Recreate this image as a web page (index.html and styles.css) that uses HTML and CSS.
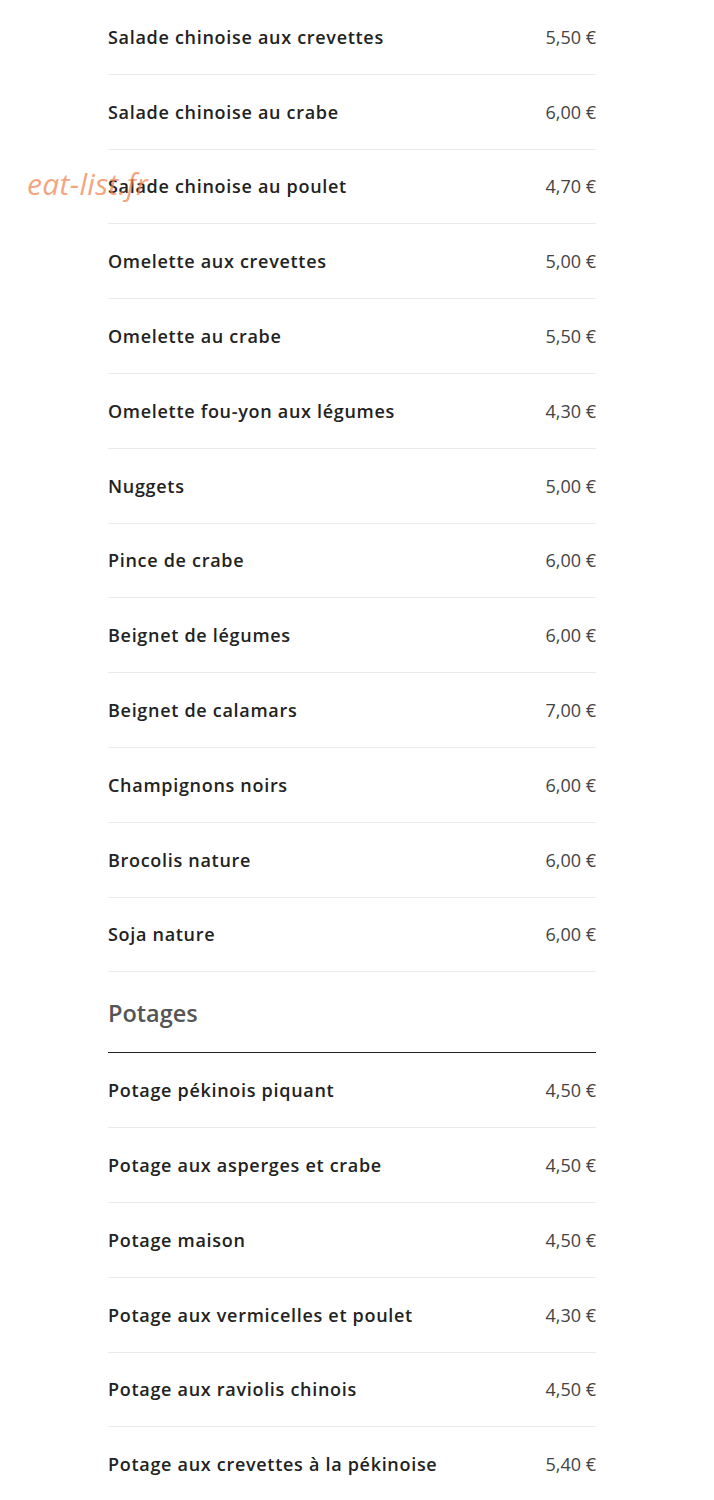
FILE: index.html
```html
<!DOCTYPE html>
<html lang="fr">
<head>
	<title>menu</title>
	<meta charset="utf-8" />
	<meta name="viewport" content="width=device-width,initial-scale=1" />
	<link rel="stylesheet" href="styles.css">
</head>
<body>
	<div class="watermark">eat-list.fr</div>
	<div class="menu">
		<div class="item"><span class="name">Salade chinoise aux crevettes</span><span class="price">5,50 €</span></div>
		<div class="item"><span class="name">Salade chinoise au crabe</span><span class="price">6,00 €</span></div>
		<div class="item"><span class="name">Salade chinoise au poulet</span><span class="price">4,70 €</span></div>
		<div class="item"><span class="name">Omelette aux crevettes</span><span class="price">5,00 €</span></div>
		<div class="item"><span class="name">Omelette au crabe</span><span class="price">5,50 €</span></div>
		<div class="item"><span class="name">Omelette fou-yon aux légumes</span><span class="price">4,30 €</span></div>
		<div class="item"><span class="name">Nuggets</span><span class="price">5,00 €</span></div>
		<div class="item"><span class="name">Pince de crabe</span><span class="price">6,00 €</span></div>
		<div class="item"><span class="name">Beignet de légumes</span><span class="price">6,00 €</span></div>
		<div class="item"><span class="name">Beignet de calamars</span><span class="price">7,00 €</span></div>
		<div class="item"><span class="name">Champignons noirs</span><span class="price">6,00 €</span></div>
		<div class="item"><span class="name">Brocolis nature</span><span class="price">6,00 €</span></div>
		<div class="item"><span class="name">Soja nature</span><span class="price">6,00 €</span></div>

		<h3 class="section">Potages</h3>

		<div class="item"><span class="name">Potage pékinois piquant</span><span class="price">4,50 €</span></div>
		<div class="item"><span class="name">Potage aux asperges et crabe</span><span class="price">4,50 €</span></div>
		<div class="item"><span class="name">Potage maison</span><span class="price">4,50 €</span></div>
		<div class="item"><span class="name">Potage aux vermicelles et poulet</span><span class="price">4,30 €</span></div>
		<div class="item"><span class="name">Potage aux raviolis chinois</span><span class="price">4,50 €</span></div>
		<div class="item"><span class="name">Potage aux crevettes à la pékinoise</span><span class="price">5,40 €</span></div>
	</div>
</body>
</html>
```

FILE: styles.css
```css
:root {
	--name-color: #222;
	--price-color: #444;
	--line-color: #ebebeb;
	--row-height: 74.8px;
}

*,
*:before,
*:after {
	box-sizing: border-box;
	margin: 0;
	padding: 0;
}

body {
	background: #fff;
	font-family: "Open Sans", "Liberation Sans", sans-serif;
	overflow: hidden;
}

.menu {
	width: 488px;
	margin-left: 108px;
}

.item {
	display: flex;
	justify-content: space-between;
	align-items: center;
	height: var(--row-height);
	border-bottom: 1px solid var(--line-color);
}

.name {
	font-size: 18px;
	font-weight: 600;
	color: var(--name-color);
	letter-spacing: 0.7px;
}

.price {
	font-size: 18px;
	color: var(--price-color);
}

.section {
	display: flex;
	align-items: center;
	height: 81px;
	padding-top: 2px;
	border-bottom: 1px solid #222;
	font-size: 23.5px;
	font-weight: 600;
	color: #555;
}

.watermark {
	position: absolute;
	left: 27px;
	top: 163px;
	font-size: 30px;
	font-style: italic;
	letter-spacing: 0.3px;
	color: rgba(240, 135, 85, 0.75);
}
```
